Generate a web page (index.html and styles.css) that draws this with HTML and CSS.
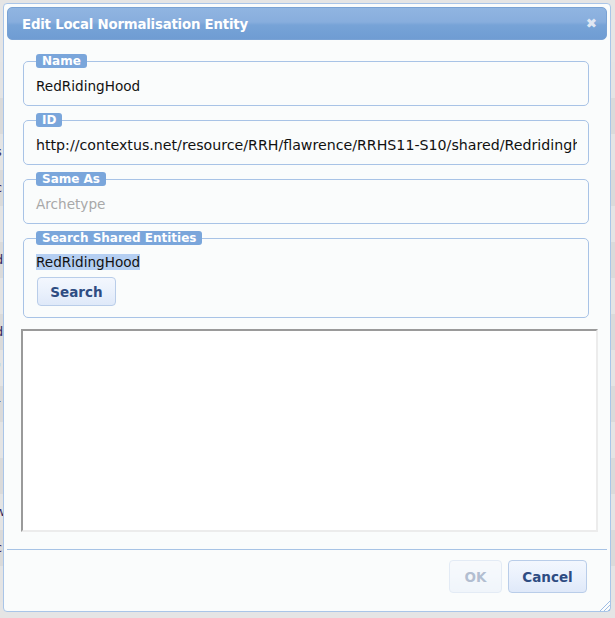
FILE: index.html
```html
<!DOCTYPE html>
<html>
<head>
<meta charset="utf-8">
<link rel="stylesheet" href="styles.css">
</head>
<body>
<div class="page">
  <div class="row">-</div>
  <div class="row alt"></div>
  <div class="row">s</div>
  <div class="row alt">c</div>
  <div class="row"></div>
  <div class="row alt">d</div>
  <div class="row"></div>
  <div class="row alt">d</div>
  <div class="row">"</div>
  <div class="row alt">r</div>
  <div class="row">i</div>
  <div class="row alt"></div>
  <div class="row">w</div>
  <div class="row alt">c</div>
  <div class="row">i</div>
</div>

<div class="dialog">
  <div class="titlebar">
    <span class="title">Edit Local Normalisation Entity</span>
    <span class="close">&#x2716;</span>
  </div>
  <div class="content">
    <fieldset class="group first">
      <legend class="badge">Name</legend>
      <div class="field">RedRidingHood</div>
    </fieldset>
    <fieldset class="group">
      <legend class="badge">ID</legend>
      <div class="field clip url">http://contextus.net/resource/RRH/flawrence/RRHS11-S10/shared/Redridinghood</div>
    </fieldset>
    <fieldset class="group">
      <legend class="badge">Same As</legend>
      <div class="field placeholder">Archetype</div>
    </fieldset>
    <fieldset class="group search">
      <legend class="badge">Search Shared Entities</legend>
      <div class="query"><span class="sel">RedRidingHood</span></div>
      <button class="btn search-btn">Search</button>
    </fieldset>
    <div class="results"></div>
  </div>
  <div class="footer">
    <button class="btn ok" disabled>OK</button>
    <button class="btn cancel">Cancel</button>
  </div>
  <div class="grip"></div>
</div>
</body>
</html>
```

FILE: styles.css
```css
html, body {
  margin: 0;
  padding: 0;
}
body {
  width: 615px;
  height: 618px;
  overflow: hidden;
  background: #e5e5e5;
  font-family: "DejaVu Sans", "Liberation Sans", sans-serif;
  position: relative;
}
.page {
  padding-top: 62px;
  margin-left: -5px;
  font-size: 13px;
  color: #3a2a60;
}
.row {
  height: 36px;
  line-height: 36px;
  background: #e4e4e4;
}
.row.alt {
  background: #dadada;
}

.dialog {
  position: absolute;
  left: 3px;
  top: 3px;
  width: 600px;
  height: 601px;
  padding: 3px;
  border: 1px solid #a9c5e8;
  border-radius: 4px;
  background: #fafcfc;
  display: flex;
  flex-direction: column;
}

.titlebar {
  flex: none;
  height: 31px;
  border: 1px solid #79a2d4;
  border-radius: 5px;
  background: linear-gradient(to bottom, #90b5e1 0%, #88aedd 45%, #77a3d7 55%, #6f9cd3 100%);
  display: flex;
  align-items: center;
  justify-content: space-between;
  padding: 0 9px 0 14px;
}
.title {
  color: #ffffff;
  font-weight: bold;
  font-size: 13.3px;
  letter-spacing: -0.2px;
  padding-top: 1px;
}
.close {
  color: #dfe7f3;
  font-size: 13.5px;
  font-weight: bold;
  line-height: 1;
  padding-top: 1px;
}

.content {
  flex: none;
  padding: 0 9px 0 14px;
}

.group {
  margin: 7px 9px 0 2px;
  padding: 4px 11px 5px 11px;
  border: 1px solid #a8c3e6;
  border-radius: 5px;
  min-width: 0;
}
.group.first {
  margin-top: 14px;
}
.badge {
  background: #7aa6db;
  color: #ffffff;
  font-weight: bold;
  font-size: 12px;
  line-height: 14px;
  height: 14px;
  padding: 0 6px;
  border-radius: 3px;
  margin-left: 1px;
}
.field {
  height: 28px;
  line-height: 28px;
  font-size: 13.6px;
  color: #111;
  padding-left: 1px;
  white-space: nowrap;
}
.url {
  font-size: 14.2px;
}
.clip {
  overflow: hidden;
}
.placeholder {
  color: #a8a8a8;
}
.search {
  padding-top: 9px;
  padding-bottom: 11px;
}
.query {
  font-size: 13.6px;
  line-height: 16px;
  height: 16px;
  padding-left: 1px;
  color: #111;
}
.sel {
  background: #b5cff2;
}

.btn {
  font-family: "DejaVu Sans", "Liberation Sans", sans-serif;
  font-weight: bold;
  font-size: 13.5px;
  color: #2e4c82;
  background: linear-gradient(to bottom, #f3f7fe 0%, #eaf1fc 50%, #dfe9f9 100%);
  border: 1px solid #b9cde9;
  border-radius: 4px;
  padding: 0;
  cursor: default;
}
.search-btn {
  display: block;
  margin-top: 7px;
  margin-left: 2px;
  width: 79px;
  height: 29px;
}

.results {
  margin: 11px 0 0 0;
  height: 199px;
  border-style: solid;
  border-width: 2px;
  border-color: #9a9a9a #ececec #ececec #9a9a9a;
  background: #ffffff;
}

.footer {
  flex: 1;
  margin-top: 17px;
  border-top: 1px solid #a7c3e5;
  display: flex;
  justify-content: flex-end;
  align-items: flex-start;
  gap: 6px;
  padding: 10px 20px 0 0;
}
.footer .btn {
  height: 33px;
}
.ok {
  width: 53px;
  opacity: 0.35;
}
.cancel {
  width: 79px;
}
.grip {
  position: absolute;
  right: 0;
  bottom: 0;
  width: 11px;
  height: 11px;
  background: repeating-linear-gradient(135deg, transparent 0 2px, #9fbde4 2px 3px);
  clip-path: polygon(100% 0, 100% 100%, 0 100%);
}
```
